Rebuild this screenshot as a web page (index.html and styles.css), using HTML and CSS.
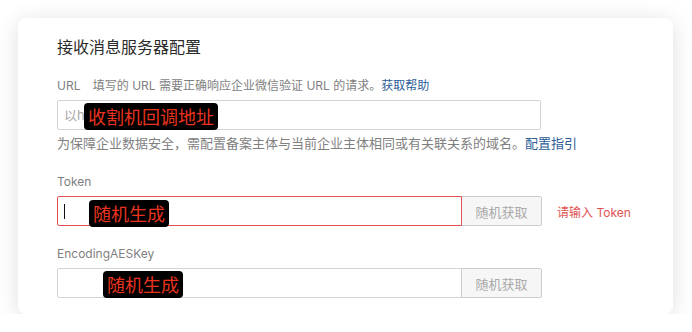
FILE: index.html
```html
<!DOCTYPE html>
<html lang="zh-CN">
<head>
    <meta charset="UTF-8">
    <meta name="viewport" content="width=device-width, initial-scale=1.0">
    <title>接收消息服务器配置</title>
    <link rel="stylesheet" href="styles.css">
</head>
<body>
    <div class="card">
        <h2 class="title">接收消息服务器配置</h2>

        <div class="label">
            <span class="label-name">URL</span>
            <span>填写的 URL 需要正确响应企业微信验证 URL 的请求。<a href="#" class="link">获取帮助</a></span>
        </div>
        <div class="field">
            <input type="text" class="input input-long" placeholder="以http://或https://开头">
            <span class="tag tag-url">收割机回调地址</span>
        </div>
        <p class="help">为保障企业数据安全，需配置备案主体与当前企业主体相同或有关联关系的域名。<a href="#" class="link">配置指引</a></p>

        <div class="label label-gap">Token</div>
        <div class="field">
            <input type="text" class="input input-short input-error">
            <span class="caret"></span>
            <button class="btn">随机获取</button>
            <span class="error">请输入 Token</span>
            <span class="tag tag-token">随机生成</span>
        </div>

        <div class="label label-gap2">EncodingAESKey</div>
        <div class="field">
            <input type="text" class="input input-short">
            <button class="btn">随机获取</button>
            <span class="tag tag-key">随机生成</span>
        </div>
    </div>
</body>
</html>
```

FILE: styles.css
```css
body {
    font-family: Inter, "Noto Sans CJK SC", sans-serif;
    background-color: #ffffff;
    margin: 0;
}
.card {
    box-sizing: border-box;
    width: 655px;
    height: 296px;
    margin: 18px 0 0 18px;
    padding: 19px 39px 16px;
    background: #ffffff;
    border-radius: 8px;
    box-shadow: 0 3px 22px rgba(0, 0, 0, 0.13);
}
.title {
    margin: 0;
    font-size: 16px;
    line-height: 20px;
    font-weight: normal;
    color: #2b2b2b;
}
.label {
    margin-top: 20px;
    margin-bottom: 5px;
    font-size: 12px;
    line-height: 18px;
    color: #7f7f7f;
}
.label-name {
    margin-right: 9px;
}
.label-gap {
    margin-top: 21px;
}
.label-gap2 {
    margin-top: 19px;
}
.link {
    color: #2c5d97;
    text-decoration: none;
}
.field {
    position: relative;
    display: flex;
    align-items: center;
    height: 30px;
}
.input {
    box-sizing: border-box;
    height: 30px;
    padding: 0 6px;
    border: 1px solid #d3d3d3;
    border-radius: 2px;
    font-family: inherit;
    font-size: 13px;
    color: #333;
    outline: none;
}
.input::placeholder {
    color: #a8a8a8;
}
.input-long {
    width: 484px;
}
.input-short {
    width: 405px;
    border-radius: 2px 0 0 2px;
}
.input-error {
    border-color: #e05252;
    position: relative;
    z-index: 1;
}
.btn {
    box-sizing: border-box;
    width: 81px;
    height: 30px;
    margin-left: -1px;
    border: 1px solid #c8ccd3;
    border-radius: 0 2px 2px 0;
    background-color: #f6f6f6;
    color: #a9a9a9;
    font-family: inherit;
    font-size: 13px;
}
.error {
    margin-left: 15px;
    font-size: 12px;
    color: #e05252;
}
.help {
    margin: 4px 0 0;
    font-size: 13px;
    line-height: 18px;
    color: #7f7f7f;
}
.caret {
    position: absolute;
    left: 7px;
    top: 8px;
    width: 1px;
    height: 15px;
    background: #111;
    z-index: 2;
}
.tag {
    position: absolute;
    padding: 0 4px;
    background: #000;
    border-radius: 4px;
    color: #e8341f;
    font-family: "Noto Sans CJK SC", sans-serif;
    font-size: 18px;
    line-height: 27px;
    z-index: 3;
}
.tag-url {
    left: 27px;
    top: 3px;
}
.tag-token {
    left: 32px;
    top: 4px;
}
.tag-key {
    left: 46px;
    top: 3px;
}
```
